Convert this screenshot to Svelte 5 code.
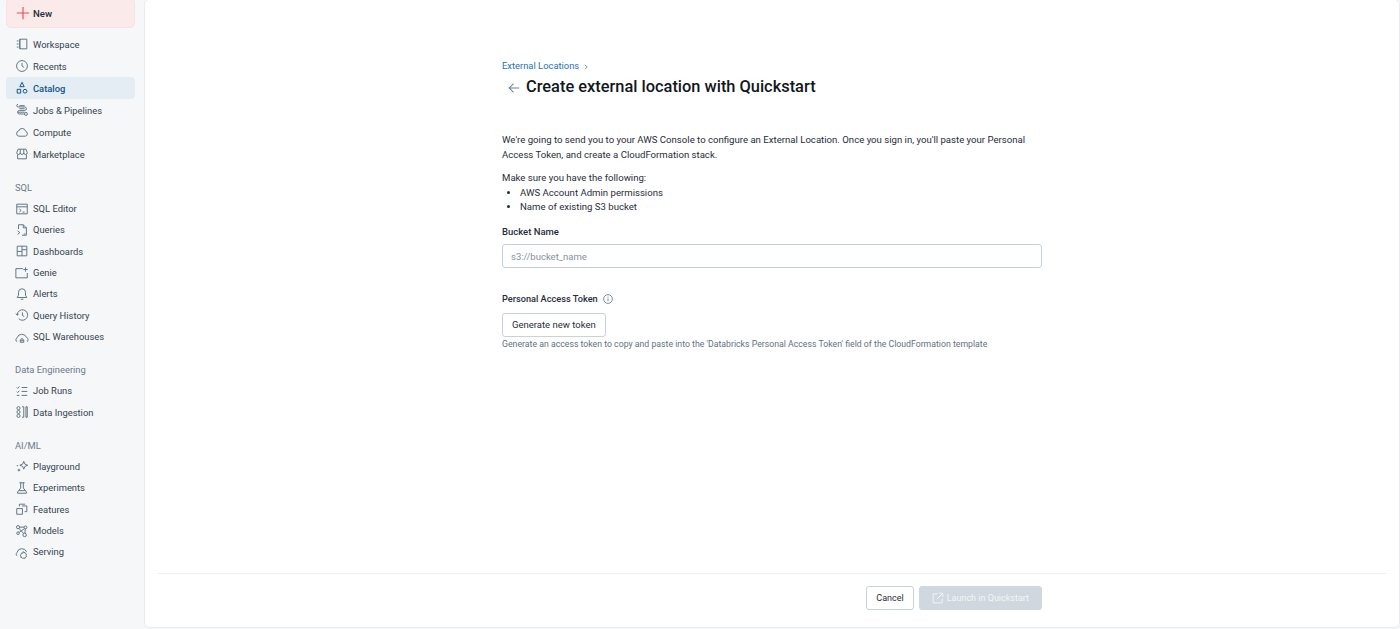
<script>
  const groups = [
    {
      tight: false,
      items: [
        { name: 'Workspace', icon: 'workspace' },
        { name: 'Recents', icon: 'recents' },
        { name: 'Catalog', icon: 'catalog', active: true },
        { name: 'Jobs & Pipelines', icon: 'jobs' },
        { name: 'Compute', icon: 'compute' },
        { name: 'Marketplace', icon: 'market' }
      ]
    },
    {
      title: 'SQL',
      tight: true,
      items: [
        { name: 'SQL Editor', icon: 'editor' },
        { name: 'Queries', icon: 'queries' },
        { name: 'Dashboards', icon: 'dash' },
        { name: 'Genie', icon: 'genie' },
        { name: 'Alerts', icon: 'alerts' },
        { name: 'Query History', icon: 'history' },
        { name: 'SQL Warehouses', icon: 'warehouse' }
      ]
    },
    {
      title: 'Data Engineering',
      tight: true,
      items: [
        { name: 'Job Runs', icon: 'runs' },
        { name: 'Data Ingestion', icon: 'ingest' }
      ]
    },
    {
      title: 'AI/ML',
      tight: true,
      items: [
        { name: 'Playground', icon: 'play' },
        { name: 'Experiments', icon: 'flask' },
        { name: 'Features', icon: 'features' },
        { name: 'Models', icon: 'models' },
        { name: 'Serving', icon: 'serving' }
      ]
    }
  ];

  const icons = {
    workspace: 'M5.5 2.5h8v11h-8zM5.5 2.5v11M2 4.5h2M2 8h2M2 11.5h2',
    recents: 'M8 1.8a6.2 6.2 0 1 0 0 12.4A6.2 6.2 0 0 0 8 1.8zM8 4.5V8l2.2 1.5',
    catalog: 'M8 1.5 10.5 6.500h-5zM2.500 9.500h4v4.300h-4zM11.500 9.500a2.150 2.150 0 1 0 0 4.300 2.150 2.150 0 0 0 0-4.300z',
    jobs: 'M3.500 1.500a1.500 1.500 0 1 0 0 3h7.500a2 2 0 0 1 0 4H5a2 2 0 0 0 0 4h5M12.500 10.800a1.700 1.700 0 1 0 0 3.400 1.700 1.700 0 0 0 0-3.400zM5 3h6M5 6.500h6M3 10.500h8',
    compute: 'M4.500 12.800a3 3 0 0 1-.4-5.900 4.200 4.200 0 0 1 8.100.3 2.900 2.900 0 0 1-.4 5.600z',
    market: 'M3.500 2.500h9l1.500 4a2 2 0 0 1-4 0 2 2 0 0 1-4 0 2 2 0 0 1-4 0zM3 8.500v5h10v-5M6 2.500v4M10 2.500v4',
    editor: 'M2 2.500h12v11H2zM2 5.500h12M5 8l2 1.700L5 11.400M8.500 11.500h2.500',
    queries: 'M4 7V2h5.500L13 5.500V14H8M9.500 2v3.500H13M3 9l2.500 2L3 13M10 12.500h2',
    dash: 'M2.500 2.500h11v11h-11zM8 2.500v11M2.500 8.500H8M8 6.500h5.500',
    genie: 'M9 3H1v10.500h13V8M12 1.500v5M9.500 4h5',
    alerts: 'M8 2a4 4 0 0 0-4 4v3.500L2.500 12h11L12 9.500V6a4 4 0 0 0-4-4zM6.500 14h3',
    history: 'M2.500 8a6 6 0 1 1 1.800 4.300M1 6.500 2.500 8.300 4.300 6.800M8.500 5v3.500l2 1.200',
    warehouse: 'M2.500 13.500a2.500 2.500 0 0 1-.2-4.500 5.800 5.800 0 0 1 11-.4 2.700 2.700 0 0 1 .3 4.900M6 14v-2.700L8 9.500l2 1.800V14zM7 13v-1.500h2V13',
    runs: 'M2 4l1 1 2-2.200M2 8.800l1 1 2-2.200M2 13h3M7.500 4H14M7.500 8.500H14M7.500 13H14',
    ingest: 'M4 1.800a1.800 1.800 0 1 0 0 3.600 1.800 1.800 0 0 0 0-3.600zM4 6.200a1.800 1.800 0 1 0 0 3.600 1.800 1.800 0 0 0 0-3.600zM4 10.600a1.800 1.800 0 1 0 0 3.600 1.800 1.800 0 0 0 0-3.600zM8 2h2v12H8M12.500 2H14v12h-1.500z',
    play: 'M10 1.500l1.300 3.200 3.200 1.300-3.200 1.300L10 10.500 8.700 7.300 5.500 6l3.200-1.300zM4.500 10v3M3 11.500h3M2 6.500h1.500',
    flask: 'M5 2h6M6.500 2v6L3 12.500v1.500h10v-1.500L9.500 8V2M4.500 11h7',
    features: 'M2 7.500h6.500V14H2zM5 5V2.500h6.500M8 4.500h5.500V11H11',
    models: 'M3.500 1.800a1.800 1.800 0 1 0 0 3.600 1.800 1.800 0 0 0 0-3.600zM12 2.200a1.600 1.600 0 1 0 0 3.200 1.600 1.600 0 0 0 0-3.200zM11 10.500a2 2 0 1 0 0 4 2 2 0 0 0 0-4zM3.500 9a1.500 1.500 0 1 0 0 3 1.500 1.500 0 0 0 0-3zM5.300 3.600h5.100M4.500 5l5.500 6M10.800 5.300 4.800 9.500M11.700 5.400l-.3 5.100',
    serving: 'M2.500 12.500a2.500 2.500 0 0 1-.2-4 5.800 5.800 0 0 1 11-.6M9.500 7.500l.6 1.300 1.400-.2.5 1.300 1.300.7-.6 1.300.6 1.200-1.300.7-.5 1.300-1.400-.2-1.200.6-.9-1.100-1.400-.3.2-1.400-.8-1.200 1.100-.9.300-1.400 1.400.2z'
  };
</script>

<div class="page">
  <nav class="sidebar">
    <button class="new">
      <svg viewBox="0 0 16 16" width="14" height="14"><path d="M8 1v14M1 8h14" fill="none" stroke="#ee4a4f" stroke-width="1.300" /></svg>
      <span>New</span>
    </button>
    {#each groups as group}
      <div class="group" class:tight={group.tight}>
        {#if group.title}
          <div class="group-title">{group.title}</div>
        {/if}
        {#each group.items as item}
          <div class="item" class:active={item.active}>
            <svg viewBox="0 0 16 16" width="14" height="14"><path d={icons[item.icon]} fill="none" stroke="currentColor" stroke-width="1.100" /></svg>
            <span>{item.name}</span>
          </div>
        {/each}
      </div>
    {/each}
  </nav>

  <main class="card">
    <div class="scroll">
      <div class="content">
        <div class="breadcrumb">
          <span class="link">External Locations</span>
          <svg viewBox="0 0 8 8" width="6" height="6"><path d="M2.500 1 5.500 4l-3 3" fill="none" stroke="#5f7281" stroke-width="1" /></svg>
        </div>
        <div class="heading">
          <svg viewBox="0 0 16 16" width="14" height="14"><path d="M14 8H2.500M7.500 3 2.500 8l5 5" fill="none" stroke="#6f7f8f" stroke-width="1.200" /></svg>
          <h1>Create external location with Quickstart</h1>
        </div>

        <p class="intro">We're going to send you to your AWS Console to configure an External Location. Once you sign in, you'll paste your Personal Access Token, and create a CloudFormation stack.</p>
        <p class="need">Make sure you have the following:</p>
        <ul>
          <li>AWS Account Admin permissions</li>
          <li>Name of existing S3 bucket</li>
        </ul>

        <label class="field-label" for="bucket">Bucket Name</label>
        <input id="bucket" placeholder="s3://bucket_name" />

        <div class="field-label token-label">
          <span>Personal Access Token</span>
          <svg viewBox="0 0 16 16" width="10" height="10"><path d="M8 1a7 7 0 1 0 0 14A7 7 0 0 0 8 1zM8 7v4.500M8 4.200v1.500" fill="none" stroke="#5f7281" stroke-width="1.300" /></svg>
        </div>
        <button class="btn generate">Generate new token</button>
        <p class="hint">Generate an access token to copy and paste into the 'Databricks Personal Access Token' field of the CloudFormation template</p>
      </div>
    </div>

    <footer>
      <div class="footer-inner">
        <button class="btn small">Cancel</button>
        <button class="btn small launch" disabled>
          <svg viewBox="0 0 16 16" width="12" height="12"><path d="M7 2.500H1.500v12h12V9M9.500 1.500h5v5M14.500 1.500 7 9" fill="none" stroke="currentColor" stroke-width="1.300" /></svg>
          Launch in Quickstart
        </button>
      </div>
    </footer>
  </main>
</div>

<style>
  :global(body) {
    background: #f6f7f9;
    font-family: Roboto, "Open Sans", sans-serif;
    color: #1f2d3a;
    overflow: hidden;
  }
  .page {
    display: flex;
    height: 629px;
    overflow: hidden;
    background: #f6f7f9;
  }
  .sidebar {
    width: 144px;
    flex: none;
    padding: 0 9px 0 6px;
    box-sizing: border-box;
  }
  .new {
    display: flex;
    align-items: center;
    gap: 3px;
    width: 100%;
    height: 30px;
    margin-top: -2px;
    padding: 0 9px;
    background: #faeae9;
    border: 1px solid #f6e2e1;
    border-radius: 5px;
    font: 500 9.600px Roboto, sans-serif;
    color: #1f2d3a;
  }
  .group {
    margin-top: 5px;
  }
  .group.tight {
    margin-top: 0;
    padding-top: 12px;
  }
  .group-title {
    height: 21px;
    line-height: 21px;
    padding-left: 9px;
    font-size: 9.400px;
    color: #6b7a88;
  }
  .item {
    display: flex;
    align-items: center;
    gap: 4px;
    height: 22px;
    padding: 0 9px;
    border-radius: 4px;
    font-size: 9.400px;
    color: #33434f;
  }
  .item svg {
    color: #5f7281;
    flex: none;
  }
  .tight .item {
    height: 21.330px;
  }
  .item.active {
    background: #e4edf4;
    color: #0e538b;
    font-weight: 500;
  }
  .item.active svg {
    color: #0e538b;
  }
  .card {
    flex: 1;
    margin: -1px 0 1px 0;
    display: flex;
    flex-direction: column;
    background: #fff;
    border: 1px solid #e8ecf0;
    border-radius: 5px;
  }
  .scroll {
    flex: 1;
    min-height: 0;
  }
  .content {
    width: 540px;
    margin: 0 auto;
    padding-top: 59px;
    font-size: 9.600px;
    line-height: 14.500px;
  }
  .breadcrumb {
    display: flex;
    align-items: center;
    gap: 4px;
    height: 15px;
  }
  .link {
    color: #2272b4;
    font-size: 9.400px;
  }
  .heading {
    display: flex;
    align-items: center;
    gap: 5px;
    height: 27px;
    padding-left: 5px;
  }
  h1 {
    margin: 0;
    font-size: 16.400px;
    font-weight: 500;
    color: #11171c;
  }
  p {
    margin: 0;
  }
  .intro {
    margin-top: 32px;
  }
  .need {
    margin-top: 9px;
  }
  ul {
    margin: 0;
    padding-left: 18px;
  }
  .field-label {
    display: block;
    margin-top: 10px;
    font-weight: 500;
    font-size: 9.500px;
    color: #1f2d3a;
  }
  input {
    display: block;
    width: 100%;
    box-sizing: border-box;
    height: 24px;
    margin-top: 5px;
    padding: 0 8px;
    border: 1px solid #c4ced8;
    border-radius: 3px;
    font: 9.500px Roboto, sans-serif;
  }
  input::placeholder {
    color: #84919c;
  }
  .token-label {
    display: flex;
    align-items: center;
    gap: 5px;
    margin-top: 24px;
    font-size: 9.200px;
  }
  .btn {
    height: 24px;
    padding: 0 9px;
    background: #fff;
    border: 1px solid #c9d2da;
    border-radius: 3px;
    font: 9.500px Roboto, sans-serif;
    color: #1f2d3a;
  }
  .small {
    font-size: 9px;
  }
  .generate {
    display: block;
    margin-top: 6px;
  }
  .hint {
    margin-top: 0;
    font-size: 8.730px;
    color: #5f7281;
  }
  footer {
    margin: 0 12px;
    border-top: 1px solid #eceff2;
    height: 53px;
    flex: none;
  }
  .footer-inner {
    width: 540px;
    margin: 12px auto 0;
    display: flex;
    justify-content: flex-end;
    gap: 5px;
  }
  .launch {
    display: flex;
    align-items: center;
    gap: 3px;
    padding: 0 12px;
    background: #d0d7df;
    border-color: #d0d7df;
    color: #f4f6f8;
  }
</style>
